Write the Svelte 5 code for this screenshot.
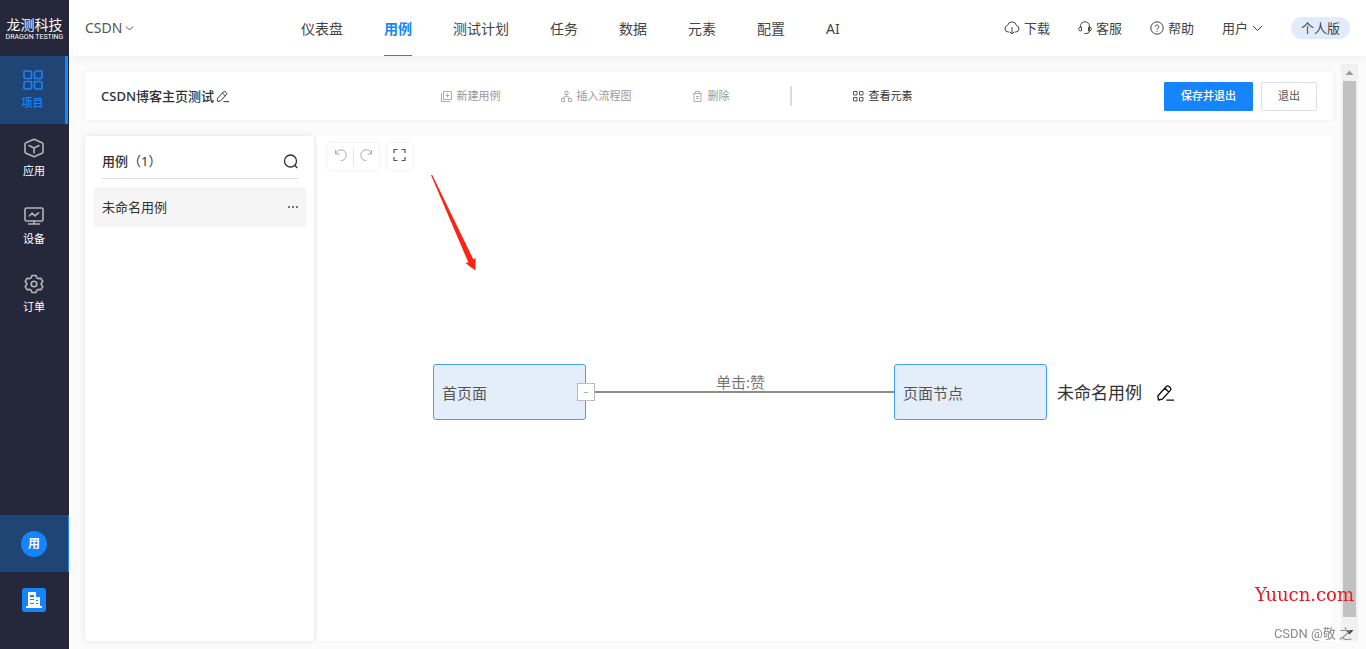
<script>
  const menu = [
    { id: 'project', label: '项目', active: true },
    { id: 'app', label: '应用' },
    { id: 'device', label: '设备' },
    { id: 'order', label: '订单' }
  ];
  const tabs = ['仪表盘', '用例', '测试计划', '任务', '数据', '元素', '配置', 'AI'];
  const nodes = [
    { label: '首页面', x: 116, y: 228 },
    { label: '页面节点', x: 577, y: 228 }
  ];

  let activeTab = $state('用例');
</script>

{#snippet pencil(size)}
  <svg width={size} height={size} viewBox="0 0 16 16" fill="none" stroke="currentColor" stroke-width="1.2" stroke-linejoin="round">
    <path d="M2.2 14.2 1.6 10.6 9 2.4Q10.2 1.1 11.6 2.2L12.6 3.1Q13.9 4.4 12.8 5.7L5.5 13.5ZM7.8 3.8l3.6 3.4M9.2 14.3H16" />
  </svg>
{/snippet}

<div class="layout">
  <aside class="sidebar">
    <a class="logo" href="/">
      <span class="logo-name">龙测科技</span>
      <span class="logo-sub">DRAGON TESTING</span>
    </a>
    <nav class="side-nav">
      {#each menu as item}
        <a class="side-item" class:active={item.active} href="#{item.id}">
          <svg width="20" height="20" viewBox="0 0 20 20" fill="none" stroke="currentColor" stroke-width="1.6" stroke-linejoin="round" stroke-linecap="round">
            {#if item.id === 'project'}
              <path d="M1 1h5.5a2 2 0 0 1 2 2v5.500H3a2 2 0 0 1-2-2zM19 1h-5.500a2 2 0 0 0-2 2v5.500H17a2 2 0 0 0 2-2zM1 19h5.500a2 2 0 0 0 2-2v-5.500H3a2 2 0 0 0-2 2zM19 19h-5.500a2 2 0 0 1-2-2v-5.500H17a2 2 0 0 1 2 2z" />
            {:else if item.id === 'app'}
              <path d="m10 1.2 8 3.6q1 .4 1 1.5v7.4q0 1.1-1 1.5l-8 3.6-8-3.6q-1-.4-1-1.5V6.300q0-1.100 1-1.500z" />
              <path d="M5 7.500 10 10l5-2.500M10 10v5" />
            {:else if item.id === 'device'}
              <rect x="1" y="2" width="18" height="13" rx="1.5" />
              <path d="M5.500 9.700 8 7.200l3 2.600 3.500-3M4.500 18h11M10 15v3" />
            {:else}
              <path d="M8 1.500h4l.8 2.200 1.600.9 2.400-.4 2 3.300-1.600 2v1l1.600 2-2 3.300-2.400-.4-1.600.9-.8 2.200H8l-.8-2.200-1.600-.9-2.400.4-2-3.300 1.600-2v-1l-1.600-2 2-3.300 2.400.4 1.600-.9z" />
              <circle cx="10" cy="10" r="2.8" />
            {/if}
          </svg>
          <span>{item.label}</span>
        </a>
      {/each}
    </nav>
    <div class="side-bottom">
      <button class="side-user" type="button"><span class="avatar">用</span></button>
      <button class="side-org" type="button" aria-label="企业">
        <svg width="24" height="24" viewBox="0 0 24 24">
          <rect width="24" height="24" rx="3" fill="#1684fc" />
          <path fill="#fff" fill-rule="evenodd" d="M6 4h8v5h4v9h2v2H4v-2h2zM8 7v2h4V7zM8 11v1h4v-1zM8 15v1h4v-1zM14 12v1h2v-1zM14 15v1h2v-1z" />
        </svg>
      </button>
    </div>
  </aside>

  <div class="page">
    <header class="header">
      <button class="switcher" type="button">
        CSDN
        <svg width="9" height="9" viewBox="0 0 9 9" fill="none" stroke="currentColor"><path d="M1 2.500 4.500 6 8 2.500" /></svg>
      </button>
      <nav class="tabs">
        {#each tabs as tab}
          <a href="#{tab}" class="tab" class:active={tab === activeTab} onclick={() => (activeTab = tab)}>{tab}</a>
        {/each}
      </nav>
      <div class="tools">
        <a class="tool" href="#download">
          <svg width="16" height="14" viewBox="0 0 16 14" fill="none" stroke="currentColor">
            <path d="M5.500 11H4.200a3.300 3.300 0 0 1-.7-6.500 4.600 4.600 0 0 1 9 0A3.300 3.300 0 0 1 11.800 11h-1.300M8 6v7M6 11l2 2 2-2" />
          </svg>
          下载
        </a>
        <a class="tool" href="#service">
          <svg width="14" height="14" viewBox="0 0 14 14" fill="none" stroke="currentColor">
            <path d="M2.500 6.500V5.300a4.500 4.500 0 0 1 9 0v4.200a3 3 0 0 1-3 3M3.500 6.200H2.200Q.7 6.200.7 7.700v.6q0 1.500 1.500 1.500h1.300zM10.500 6.200h1.300q1.500 0 1.500 1.500v.6q0 1.500-1.500 1.500h-1.300zM6.300 12.500h2.400" />
          </svg>
          客服
        </a>
        <a class="tool" href="#help">
          <svg width="14" height="14" viewBox="0 0 14 14" fill="none" stroke="currentColor">
            <circle cx="7" cy="7" r="6.2" />
            <path d="M5.200 5.700a1.800 1.800 0 1 1 2.700 1.600Q7 7.800 7 8.600M7 9.800v1.100" />
          </svg>
          帮助
        </a>
        <button class="tool" type="button">
          用户
          <svg width="11" height="9" viewBox="0 0 11 9" fill="none" stroke="currentColor"><path d="M1 2 5.500 6.500 10 2" /></svg>
        </button>
        <span class="plan">个人版</span>
      </div>
    </header>

    <main class="main">
      <div class="content">
        <section class="action-bar">
          <div class="title">
            <h1>CSDN博客主页测试</h1>
            <button class="icon-btn" type="button" aria-label="编辑名称">{@render pencil(13)}</button>
          </div>
          <div class="actions">
            <button class="action" type="button" disabled>
              <svg width="11" height="11" viewBox="0 0 11 11" fill="none" stroke="currentColor"><path d="M2.500.5h8v8h-8zM.5 2v8.500H9M6.500 2.500v4M4.500 4.500h4" /></svg>
              新建用例
            </button>
            <button class="action" type="button" disabled>
              <svg width="11" height="11" viewBox="0 0 11 11" fill="none" stroke="currentColor"><path d="M4 .5h3v3H4zM.5 7.500h3v3h-3zM7.500 7.500h3v3h-3zM5.500 3.500v2M2 7.500q0-2 3.500-2t3.500 2" /></svg>
              插入流程图
            </button>
            <button class="action" type="button" disabled>
              <svg width="11" height="11" viewBox="0 0 11 11" fill="none" stroke="currentColor"><path d="M1 2.500h9M3.500 2.500v-2h4v2M2 2.500v8h7v-8M4 5.500h3M4 7.500h3" /></svg>
              删除
            </button>
            <span class="divider"></span>
            <button class="action strong" type="button">
              <svg width="11" height="11" viewBox="0 0 11 11" fill="none" stroke="currentColor"><path d="M.5.5h3.500v3.500H.5zM6.500.5H10v3.500H6.500zM.5 6.500h3.500V10H.5zM6.500 6.500H10V10H6.500z" /></svg>
              查看元素
            </button>
          </div>
          <button class="btn primary" type="button">保存并退出</button>
          <button class="btn" type="button">退出</button>
        </section>

        <div class="workspace">
          <section class="case-panel">
            <div class="case-head">
              <h2>用例<span>（1）</span></h2>
              <button class="icon-btn" type="button" aria-label="搜索">
                <svg width="15" height="15" viewBox="0 0 15 15" fill="none" stroke="currentColor" stroke-width="1.3"><circle cx="7.500" cy="7" r="6" /><path d="m11.500 11 2.800 3" /></svg>
              </button>
            </div>
            <div class="case-row">
              <span>未命名用例</span>
              <button class="icon-btn" type="button" aria-label="更多">
                <svg width="10" height="2" viewBox="0 0 10 2" fill="#777"><path d="M0 0h2v2H0zM4 0h2v2H4zM8 0h2v2H8z" /></svg>
              </button>
            </div>
          </section>

          <section class="canvas">
            <div class="canvas-tools">
              <div class="tool-group">
                <button type="button" aria-label="撤销">
                  <svg width="13" height="14" viewBox="0 0 13 14" fill="none" stroke="#aaa"><path d="M1.500 2v4h4M1.800 5.600A5.300 5.300 0 1 1 7 12.500" /></svg>
                </button>
                <button type="button" aria-label="重做">
                  <svg width="13" height="14" viewBox="0 0 13 14" fill="none" stroke="#aaa"><path d="M11.500 2v4h-4M11.200 5.600A5.300 5.300 0 1 0 6 12.500" /></svg>
                </button>
              </div>
              <div class="tool-group">
                <button type="button" aria-label="全屏">
                  <svg width="13" height="14" viewBox="0 0 13 14" fill="none" stroke="#555" stroke-width="1.200"><path d="M1 5V1.500H4.500M8.500 1.500H12V5M12 9v3.500H8.500M4.500 12.500H1V9" /></svg>
                </button>
              </div>
            </div>

            <svg class="pointer" width="46" height="97" viewBox="0 0 46 97"><path fill="#fd2314" d="M0 0h1.300l41 84.300 2.400-1-.3 12.200-9.800-7.200 2.700-1z" /></svg>

            <span class="edge"></span>
            <span class="edge-label">单击:赞</span>
            {#each nodes as node}
              <div class="node" style="left: {node.x}px; top: {node.y}px;">{node.label}</div>
            {/each}
            <button class="fold" type="button">−</button>
            <div class="case-name">
              <span>未命名用例</span>
              <button class="icon-btn" type="button" aria-label="编辑用例名称">{@render pencil(18)}</button>
            </div>
          </section>
        </div>
      </div>

      <div class="scrollbar" aria-hidden="true">
        <svg width="17" height="17" viewBox="0 0 17 17"><path d="m4.500 11 4-4.500 4 4.500z" fill="#9a9a9a" /></svg>
        <div class="thumb"></div>
        <svg width="17" height="24" viewBox="0 0 17 24"><path d="m4.500 13 4 4.500 4-4.500z" fill="#444" /></svg>
      </div>
    </main>
  </div>

  <span class="site-mark">Yuucn.com</span>
  <span class="author-mark">CSDN @敬 之</span>
</div>

<style>
  :global(body) {
    background: #fbfbfb;
    font-family: "Noto Sans", "Noto Sans CJK SC", sans-serif;
    color: #303133;
  }
  .layout {
    display: flex;
    min-height: 100vh;
    font-size: 13px;
    line-height: 20px;
  }
  a {
    color: inherit;
    text-decoration: none;
  }
  button {
    padding: 0;
    border: none;
    background: none;
    font: inherit;
    color: inherit;
    cursor: pointer;
  }
  svg {
    display: block;
    flex: none;
  }

  .sidebar {
    flex: none;
    display: flex;
    flex-direction: column;
    width: 69px;
    background: #25273b;
    color: #fff;
  }
  .logo {
    display: flex;
    flex-direction: column;
    align-items: center;
    justify-content: center;
    gap: 1px;
    height: 56px;
    white-space: nowrap;
  }
  .logo-name {
    font-size: 14px;
    line-height: 16px;
  }
  .logo-sub {
    font-family: Roboto, sans-serif;
    font-size: 7px;
    line-height: 6px;
  }
  .side-nav {
    padding-right: 1px;
  }
  .side-item {
    display: flex;
    flex-direction: column;
    align-items: center;
    gap: 3px;
    height: 68px;
    padding-top: 14px;
    box-sizing: border-box;
    font-size: 11px;
  }
  .side-item svg {
    color: #b5b5b9;
  }
  .side-item.active {
    border-right: 3px solid #1684fc;
    background: #204474;
    color: #1684fc;
    font-weight: 500;
  }
  .side-item.active svg {
    color: #1684fc;
  }
  .side-bottom {
    display: flex;
    flex-direction: column;
    margin-top: auto;
    padding-bottom: 37px;
    gap: 16px;
  }
  .side-user {
    display: flex;
    align-items: center;
    justify-content: center;
    height: 57px;
    border-right: 1px solid #1684fc;
    background: #204474;
  }
  .avatar {
    width: 26px;
    border-radius: 50%;
    background: #1684fc;
    font-size: 12px;
    font-weight: 700;
    line-height: 26px;
  }
  .side-org {
    align-self: center;
    padding-right: 1px;
  }

  .page {
    flex: 1;
    display: flex;
    flex-direction: column;
    min-width: 0;
  }
  .header {
    position: relative;
    display: flex;
    align-items: center;
    height: 56px;
    padding: 0 16px;
    background: #fff;
    box-shadow: 0 2px 10px rgba(0, 0, 0, 0.06);
    white-space: nowrap;
  }
  .switcher {
    display: flex;
    align-items: center;
    gap: 3px;
    flex: 0 0 17%;
    font-size: 14px;
    color: #555;
  }
  .tabs {
    display: flex;
    gap: 41px;
    padding-left: 1px;
    font-size: 14px;
  }
  .tab {
    height: 55px;
    border-bottom: 1px solid transparent;
    line-height: 57px;
    color: #444;
  }
  .tab.active {
    border-color: #1684fc;
    color: #1684fc;
    font-weight: 700;
  }
  .tools {
    display: flex;
    align-items: center;
    gap: 28px;
    margin-left: auto;
    color: #444;
  }
  .tool {
    display: flex;
    align-items: center;
    gap: 4px;
  }
  .plan {
    padding: 0 10px;
    border-radius: 11px;
    background: #e0ebfd;
    line-height: 22px;
  }

  .main {
    flex: 1;
    display: flex;
    padding: 8px 8px 8px 16px;
  }
  .content {
    flex: 1;
    display: flex;
    flex-direction: column;
    gap: 16px;
    min-width: 0;
    padding: 8px 8px 0 0;
  }
  .action-bar {
    display: flex;
    align-items: center;
    height: 48px;
    padding: 0 16px;
    background: #fff;
    box-shadow: 0 0 6px rgba(0, 0, 0, 0.05);
    white-space: nowrap;
  }
  .title {
    flex: 0 0 28%;
    display: flex;
    align-items: center;
    gap: 2px;
  }
  h1,
  h2 {
    margin: 0;
    font-size: 13px;
    font-weight: 500;
  }
  .actions {
    flex: 1;
    display: flex;
    align-items: center;
    gap: 61px;
  }
  .action {
    display: flex;
    align-items: center;
    gap: 4px;
    font-size: 11px;
    color: #999;
  }
  .action svg {
    opacity: 0.8;
  }
  .action.strong {
    color: #303133;
  }
  .divider {
    width: 2px;
    height: 20px;
    background: #dcdcdc;
  }
  .btn {
    height: 29px;
    margin-left: 8px;
    padding: 0 16px;
    border: 1px solid #dcdfe6;
    border-radius: 1px;
    background: #fff;
    font-size: 11px;
    color: #555;
  }
  .btn.primary {
    border-color: #1684fc;
    background: #1684fc;
    color: #fff;
    font-weight: 500;
  }

  .workspace {
    flex: 1;
    display: flex;
    gap: 3px;
  }
  .case-panel {
    flex: none;
    width: 229px;
    padding: 8px 8px 8px 9px;
    box-sizing: border-box;
    border-radius: 3px 3px 0 0;
    background: #fff;
    box-shadow: 0 0 6px rgba(0, 0, 0, 0.1);
  }
  .case-head {
    display: flex;
    align-items: center;
    justify-content: space-between;
    height: 34px;
    margin: 0 8px 8px;
    border-bottom: 1px solid #dcdcdc;
  }
  .case-head span {
    font-weight: 400;
  }
  .case-row {
    display: flex;
    align-items: center;
    justify-content: space-between;
    height: 40px;
    padding: 0 8px;
    border-radius: 2px;
    background: #f5f5f5;
  }

  .canvas {
    position: relative;
    flex: 1;
    overflow: hidden;
    background: #fff;
  }
  .canvas-tools {
    display: flex;
    gap: 8px;
    padding: 7px 11px;
  }
  .tool-group {
    display: flex;
    align-items: center;
    height: 27px;
    border-radius: 2px;
    box-shadow: 0 0 3px rgba(0, 0, 0, 0.1);
  }
  .tool-group button {
    padding: 0 6px 4px;
  }
  .tool-group button + button {
    border-left: 1px solid #e4e4e4;
  }
  .pointer {
    position: absolute;
    left: 114px;
    top: 39px;
  }
  .node {
    position: absolute;
    width: 153px;
    height: 56px;
    padding-left: 8px;
    box-sizing: border-box;
    border: 1px solid #409eff;
    border-radius: 3px;
    background: #e3eefa;
    font-size: 15px;
    line-height: 56px;
    color: #555;
  }
  .edge {
    position: absolute;
    left: 269px;
    top: 255px;
    width: 308px;
    height: 2px;
    background: #8c8c8c;
  }
  .edge-label {
    position: absolute;
    left: 399px;
    top: 236px;
    font-size: 15px;
    color: #777;
  }
  .fold {
    position: absolute;
    left: 260px;
    top: 247px;
    width: 18px;
    height: 18px;
    border: 1px solid #bbb;
    background: #fff;
    font-size: 10px;
    line-height: 14px;
    color: #999;
  }
  .case-name {
    position: absolute;
    left: 740px;
    top: 247px;
    display: flex;
    align-items: center;
    gap: 14px;
    font-size: 17px;
    white-space: nowrap;
  }
  .case-name button {
    color: #111;
  }

  .scrollbar {
    flex: none;
    display: flex;
    flex-direction: column;
    width: 17px;
    background: #f1f1f1;
  }
  .thumb {
    flex: 1;
    margin: 0 2px;
    background: #c1c1c1;
  }

  /* watermarks over the page corner */
  .site-mark {
    position: fixed;
    right: 12px;
    bottom: 44px;
    font-family: "DejaVu Serif", serif;
    font-size: 18px;
    color: #f5141e;
  }
  .author-mark {
    position: fixed;
    right: 14px;
    bottom: 5px;
    font-family: Roboto, "Noto Sans CJK SC", sans-serif;
    font-size: 13px;
    color: #8a8a8a;
  }
</style>
